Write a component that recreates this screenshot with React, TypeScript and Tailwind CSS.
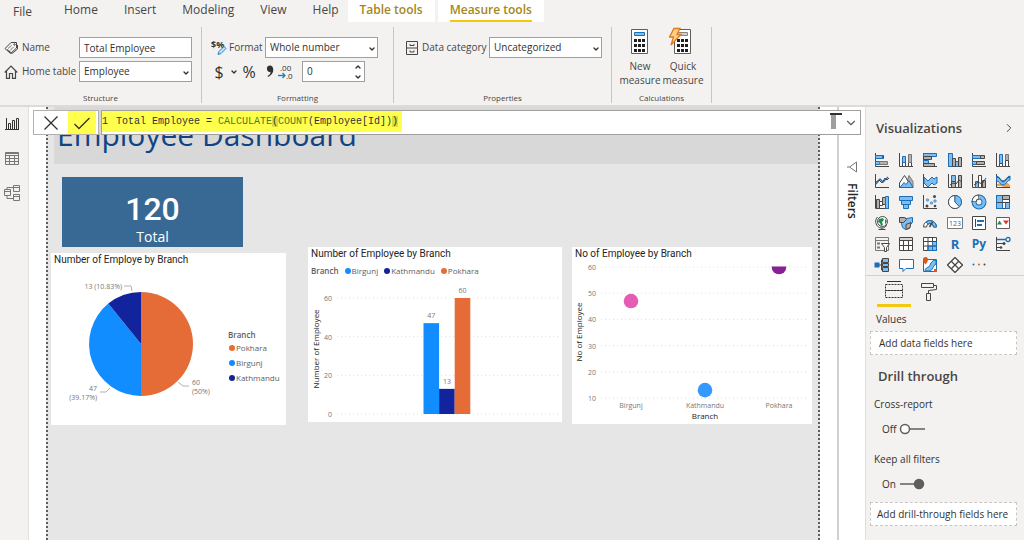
import type { ReactNode } from "react"
import { ChevronDown, ChevronRight, ChevronUp } from "lucide-react"

const tabs = ["Home", "Insert", "Modeling", "View", "Help"]

const branches = [
  { name: "Birgunj", count: 47, color: "#118dff" },
  { name: "Kathmandu", count: 13, color: "#12239e" },
  { name: "Pokhara", count: 60, color: "#e66c37" },
]

const points = [
  { name: "Birgunj", count: 47, x: 59, color: "#e65cb4" },
  { name: "Kathmandu", count: 13, x: 133, color: "#3599ff" },
  { name: "Pokhara", count: 60, x: 207, color: "#881f94" },
]

const DARK = "#484644"
const GRAY = "#b3b0ad"
const BLUE = "#7dbdf0"
const EDGE = "#1c6fb5"

const axis = <path d="M1.500 1v13.500h13.500" stroke={DARK} />

const visuals: { name: string; icon: ReactNode }[] = [
  { name: "Stacked bar chart", icon: <>{axis}<path d="M6.500 3.500h3v3h-3z" fill={GRAY} stroke={DARK} /><path d="M1.500 3.500h7v3h-7zM1.500 9.500h4v3h-4z" fill={BLUE} stroke={EDGE} /><path d="M5.500 9.500h8v3h-8z" fill={GRAY} stroke="#797775" /></> },
  { name: "Stacked column chart", icon: <>{axis}<path d="M4.500 9.500h3v5h-3zM10.500 7.500h3v7h-3z" fill="#fff" stroke={DARK} /><path d="M4.500 4.500h3v6h-3z" fill={BLUE} stroke={EDGE} /><path d="M10.500 2.500h3v8h-3z" fill={GRAY} stroke="#797775" /></> },
  { name: "Clustered bar chart", icon: <>{axis}<path d="M1.500 1.500h13v3h-13zM1.500 8.500h5v3h-5z" fill={BLUE} stroke={EDGE} /><path d="M1.500 4.500h8v3h-8zM1.500 11.500h11v3h-11z" fill={GRAY} stroke={DARK} /></> },
  { name: "Clustered column chart", icon: <>{axis}<path d="M1.500 1.500h4v13h-4zM8.500 9.500h3v5h-3z" fill={BLUE} stroke={EDGE} /><path d="M5.500 6.500h3v8h-3zM11.500 5.500h3v9h-3z" fill={GRAY} stroke={DARK} /></> },
  { name: "100% stacked bar chart", icon: <>{axis}<path d="M1.500 3.500h8v3h-8zM1.500 9.500h4v3h-4z" fill={BLUE} stroke={EDGE} /><path d="M9.500 3.500h4v3h-4zM5.500 9.500h8v3h-8z" fill={GRAY} stroke={DARK} /></> },
  { name: "100% stacked column chart", icon: <>{axis}<path d="M4.500 2.500h3v9h-3z" fill={BLUE} stroke={EDGE} /><path d="M10.500 2.500h3v6h-3z" fill={GRAY} stroke="#797775" /><path d="M4.500 11.500h3v3h-3zM10.500 8.500h3v6h-3z" fill="#fff" stroke={DARK} /></> },
  { name: "Line chart", icon: <>{axis}<path d="M2 11l4-5 3 3 5-5" stroke={EDGE} strokeWidth="1.300" /><path d="M2 9l3-2 3 3 3-5 2 2 2-2" stroke={DARK} /></> },
  { name: "Area chart", icon: <><path d="M7 14.500l4-12 4 6v6z" fill={GRAY} stroke="#797775" /><path d="M1.500 14.500V10l5-7.500 5 8v4z" fill="#fff" stroke={DARK} /><path d="M2 14.500l4-5 2 2 3-4 4 7z" fill={BLUE} stroke={EDGE} /></> },
  { name: "Stacked area chart", icon: <><path d="M2 4l4 4 4-4 2 2 3-2v6l-3 2-2-2-4 4-4-4z" fill={BLUE} stroke={EDGE} />{axis}</> },
  { name: "Line and stacked column chart", icon: <>{axis}<path d="M4.500 2.500h4v6h-4z" fill={BLUE} stroke={EDGE} /><path d="M4.500 8.500h4v6h-4zM11.500 2.500h3v12h-3z" fill={GRAY} stroke={DARK} /><path d="M3 12l3-2 3 1 3-4 3 2" stroke={DARK} /></> },
  { name: "Line and clustered column chart", icon: <>{axis}<path d="M4.500 8.500h3v6h-3z" fill={BLUE} stroke={EDGE} /><path d="M7.500 2.500h3v12h-3z" fill="#fff" stroke={DARK} /><path d="M11.500 7.500h3v7h-3z" fill={GRAY} stroke={DARK} /><path d="M3 12l4-3 4 2 4-6" stroke={DARK} /></> },
  { name: "Ribbon chart", icon: <>{axis}<path d="M2 11l4-1 3-3 6 5v2H9l-3-1H2z" fill="#f0a04b" /><path d="M1.500 3c3 0 4 5 6.500 5s4-5 7-5v4c-3 0-4 5-7 5s-3.500-4-6.500-4z" fill={BLUE} stroke={EDGE} /><path d="M2 4c3 0 4 5 6 5s4-5 7-5" stroke={DARK} /></> },
  { name: "Waterfall chart", icon: <>{axis}<path d="M2.500 5.500h3v9h-3zM8.500 3.500h3v7h-3z" fill={GRAY} stroke={DARK} /><path d="M5.500 7.500h3v4h-3z" fill="#fff" stroke={DARK} /><path d="M11.500 2.500h3v12h-3z" fill={BLUE} stroke={EDGE} /></> },
  { name: "Funnel", icon: <path d="M1.500 2.500h13v4h-13zM3.500 6.500h9v4h-9zM5.500 10.500h5v4h-5z" fill={BLUE} stroke={EDGE} /> },
  { name: "Scatter chart", icon: <>{axis}<g fill={DARK}><circle cx="12.500" cy="2.500" r="1.500" /><circle cx="5" cy="12" r="1.500" /><circle cx="13" cy="12" r="1.300" /></g><g fill={BLUE} stroke={EDGE} strokeWidth=".5"><circle cx="5.500" cy="6" r="1.300" /><circle cx="9.500" cy="9" r="1.300" /><circle cx="13" cy="7" r="1.300" /></g></> },
  { name: "Pie chart", icon: <><circle cx="8" cy="8" r="6.500" fill={BLUE} stroke={EDGE} /><path d="M8 8V1.500A6.500 6.500 0 1 0 12.500 12.700z" fill="#fff" stroke={DARK} /><path d="M8 1.500V8l4.500 4.700A6.500 6.500 0 0 0 8 1.500z" fill={BLUE} stroke={EDGE} /></> },
  { name: "Donut chart", icon: <><circle cx="8" cy="8" r="5" stroke={EDGE} strokeWidth="5" /><circle cx="8" cy="8" r="5" stroke={BLUE} strokeWidth="3" /><path d="M3 8a5 5 0 0 1 5-5" stroke={DARK} strokeWidth="5" /><path d="M3 7.300A5 5 0 0 1 7.300 3" stroke="#fff" strokeWidth="3" /></> },
  { name: "Treemap", icon: <><path d="M1.500 1.500h13v13h-13z" fill="#fff" stroke={DARK} /><path d="M1.500 1.500h6v13h-6zM10.500 8.500h4v6h-4z" fill={BLUE} stroke={EDGE} /><path d="M7.500 1.500h7v4h-7z" fill={GRAY} stroke={DARK} /><path d="M1.500 8.500h13" stroke={DARK} /></> },
  { name: "Map", icon: <><circle cx="8.500" cy="6.500" r="5" fill="#fff" stroke={DARK} /><path d="M5 4l4-1 1 2-2 2 1 3-2 1-1-3-2-1zM11 4l2 2-2 4z" fill="#218c4a" /><path d="M3.500 2C.500 5 1.500 10 4.500 12s7 1 8-2M8 13v1.500M4.500 14.500h7" stroke={DARK} /></> },
  { name: "Filled map", icon: <><path d="M1.500 3.500l5-1 2 1 6-1v5l-2 2-1 4-4 1-3-2-1-4-2-2z" fill={BLUE} stroke={EDGE} /><path d="M1.500 2.500h5l2 2-3 3-4 0zM8 9.500l5-2-1 5-4 2z" fill={GRAY} stroke={DARK} /></> },
  { name: "Gauge", icon: <><path d="M1.500 12a6.500 6.500 0 0 1 13 0h-3a3.500 3.500 0 0 0-7 0z" fill="#fff" stroke={DARK} /><path d="M4 7a6.500 6.500 0 0 1 10.500 5h-3A3.500 3.500 0 0 0 6 9z" fill={BLUE} stroke={EDGE} /><path d="M7.500 12l3-5" stroke={DARK} strokeWidth="1.500" /></> },
  { name: "Card", icon: <><path d="M.500 2.500h15v11H.500z" fill="#fff" stroke="#797775" /><text x="8" y="10.500" textAnchor="middle" fontSize="7" fill={EDGE}>123</text></> },
  { name: "Multi-row card", icon: <><path d="M1.500 1.500h13v13h-13z" fill="#fff" stroke={DARK} /><path d="M4.500 4v8" stroke={DARK} /><path d="M6 6h7M6 10h5" stroke={EDGE} strokeWidth="2" /></> },
  { name: "KPI", icon: <><path d="M1.500 2.500h13v11h-13z" fill="#fff" stroke="#605e5c" /><path d="M2 9.500l2.500-4 2.500 4z" fill="#218c4a" /><path d="M8 5.500h6l-3 4z" fill="#d83b3b" /></> },
  { name: "Slicer", icon: <><path d="M1.500 1.500h13v13h-13zM1.500 4.500h13" stroke="#797775" /><path d="M3 7.500h3M3 11.500h3" stroke="#797775" strokeWidth="2" /><path d="M7.500 7.500h8l-3 4v4h-2v-4z" fill="#fff" stroke={DARK} /></> },
  { name: "Table", icon: <><path d="M1.500 1.500h13v13h-13z" fill="#fff" stroke={DARK} /><path d="M1.500 4.500h13M1.500 9.500h13M5.500 4v10.500M10.500 4v10.500" stroke={DARK} /><path d="M2 3h12" stroke={GRAY} /></> },
  { name: "Matrix", icon: <><path d="M1.500 1.500h13v13h-13z" fill="#fff" /><path d="M10 5h5v10h-5zM5.500 10h5v5h-5z" fill={BLUE} /><path d="M1.500 1.500h13v13h-13zM1.500 5.500h13M1.500 10h13M6 1.500v13M10.500 1.500v13" stroke={DARK} /><path d="M10.500 5.500v9h4v-9M5.500 10h9M6 10v4.500h4" stroke={EDGE} /></> },
  { name: "R script visual", icon: <text x="8" y="13" textAnchor="middle" fontSize="13" fontWeight="700" fill={EDGE}>R</text> },
  { name: "Python visual", icon: <text x="8" y="12" textAnchor="middle" fontSize="12" fontWeight="700" fill={EDGE}>Py</text> },
  { name: "Key influencers", icon: <>{axis}<path d="M2 3.500h9" stroke={EDGE} strokeWidth="1.500" /><circle cx="13" cy="3.500" r="2" fill="#fff" stroke={EDGE} strokeWidth="1.300" /><path d="M2 7.500h6M2 11.500h4" stroke={DARK} /><circle cx="9" cy="7.500" r="1.500" fill={DARK} /><circle cx="6" cy="11.500" r="1.300" fill={DARK} /></> },
  { name: "Decomposition tree", icon: <><path d="M5 8h5M7.500 3v10M7.500 3H10M7.500 13H10" stroke={DARK} /><path d="M.500 5.500h5v5h-5z" fill={EDGE} /><path d="M8.500 1.500h6v4h-6zM8.500 6.500h6v3h-6zM8.500 10.500h6v4h-6z" fill={BLUE} stroke={DARK} /></> },
  { name: "Q&A", icon: <path d="M1.500 2.500h14v9H8l-3 3v-3H1.500z" fill="#fff" stroke={EDGE} /> },
  { name: "ArcGIS map", icon: <><path d="M1.500 2.500h13v12h-13z" fill="#fff" stroke={EDGE} /><path d="M3 14c0-4 4-3 5-6s3-5 6-5v4c-3 1-3 6-6 7z" fill={BLUE} stroke={EDGE} /><path d="M1 2.500a2 2 0 0 1 5 0c0 2-1 3-2.500 5-1.500-2-2.500-3-2.500-5zM12 12h3v3h-3z" fill="#d85b13" /></> },
  { name: "Power Apps", icon: <><path d="M8 .500l7.500 7.500L8 15.500.500 8z" fill="#fff" stroke={DARK} strokeWidth="1.300" /><path d="M4.500 4.500l7 7M11.500 4.500l-7 7" stroke={DARK} strokeWidth="1.300" /></> },
  { name: "Get more visuals", icon: <><circle cx="2.500" cy="7.500" r="1" fill={EDGE} /><circle cx="8" cy="7.500" r="1" fill="#d85b13" /><circle cx="13.500" cy="7.500" r="1" fill={DARK} /></> },
]

function Group({ title, className, children }: { title: string; className: string; children: ReactNode }) {
  return (
    <section className={`flex flex-col justify-between border-r border-[#c8c6c4] ${className}`}>
      <div>{children}</div>
      <h2 className="text-center text-[8px] leading-[10px] text-[#484644]">{title}</h2>
    </section>
  )
}

function Select({ id, value }: { id: string; value: string }) {
  return (
    <span className="relative block h-[21px] w-[113px]">
      <select id={id} className="h-full w-full appearance-none border border-[#a19f9d] bg-white pl-1 text-[10px] text-[#323130]">
        <option>{value}</option>
      </select>
      <ChevronDown className="pointer-events-none absolute top-2 right-[2px] h-2 w-2 text-[#323130]" strokeWidth={4} />
    </span>
  )
}

function Calculator({ quick = false }: { quick?: boolean }) {
  return (
    <svg className="h-7 w-7" viewBox="0 0 28 28" fill="none">
      <path d="M5.500 2.500h16v24h-16z" fill="#fff" stroke="#605e5c" />
      <path d="M8.500 5.500h10v3h-10z" fill={quick ? "#d2d0ce" : "#7dbdf0"} stroke={quick ? "#8a8886" : "#1c6fb5"} />
      <path d="M8 13.500h11M8 18.500h11M8 23.500h11" stroke="#201f1e" strokeWidth="3" strokeDasharray="3 1" />
      {quick && <path d="M5 1.500h6l-3 6h4L2 18l2.500-8h-4z" fill="#fcd28a" stroke="#df7a1c" strokeWidth="1.300" />}
    </svg>
  )
}

function Ribbon() {
  return (
    <header className="border-b-2 border-[#dddbda]">
      <nav className="flex h-[23px] items-start pl-[13px] text-[12px] leading-5">
        <a href="#file" className="mr-8 pt-[2px]">File</a>
        <div className="mr-[9px] flex gap-[26px]">
          {tabs.map((tab) => (
            <a key={tab} href={`#${tab.toLowerCase()}`}>{tab}</a>
          ))}
        </div>
        <a href="#table-tools" className="mr-[3px] h-[22px] bg-white px-3 font-semibold text-[#a48719]">Table tools</a>
        <a href="#measure-tools" className="h-[22px] bg-white px-3 font-semibold text-[#a48719]">
          <span className="block h-[22px] border-b-2 border-[#f2c811]">Measure tools</span>
        </a>
      </nav>

      <div className="flex h-[82px] pt-1 pb-[2px] text-[10px]">
        <Group title="Structure" className="w-[202px]">
          <div className="flex flex-col gap-[3px] pt-[10px] pl-1">
            <div className="flex items-center">
              <label htmlFor="name" className="flex w-[75px] items-center gap-1">
                <svg className="h-[14px] w-[14px]" viewBox="0 0 14 14" fill="none" stroke="#484644">
                  <path d="M1 7.500l6-6h5.500V7l-6 5.500zM3 8.500l5 4L13.500 8V4" />
                  <path d="M4 7.500l3.500-3M6 9.500L9.500 6" strokeWidth=".7" />
                  <circle cx="10.500" cy="3.500" r=".7" />
                </svg>
                Name
              </label>
              <input id="name" defaultValue="Total Employee" className="h-[21px] w-[113px] border border-[#a19f9d] bg-white pl-1 text-[#323130]" />
            </div>
            <div className="flex items-center">
              <label htmlFor="home-table" className="flex w-[75px] items-center gap-1 whitespace-nowrap">
                <svg className="h-[14px] w-[14px] shrink-0" viewBox="0 0 14 14" fill="none" stroke="#484644" strokeWidth="1.200">
                  <path d="M.700 7.500L7 1l6.300 6.500M2.500 6v7.300h3V8.500h3v4.800h3V6" />
                </svg>
                Home table
              </label>
              <Select id="home-table" value="Employee" />
            </div>
          </div>
        </Group>

        <Group title="Formatting" className="w-[192px]">
          <div className="flex flex-col gap-[3px] pt-[10px] pl-[9px]">
            <div className="flex items-center">
              <label htmlFor="format" className="flex w-[54px] items-center gap-[3px]">
                <svg className="h-4 w-[15px] overflow-visible" viewBox="0 0 15 16" fill="none">
                  <text x="0" y="8" fontSize="9" fontWeight="700" fill="#323130">$%</text>
                  <path d="M7 14.500l1-3 5-5 2 2-5 5z" fill="#c7e3f7" stroke="#1c84c6" />
                </svg>
                Format
              </label>
              <Select id="format" value="Whole number" />
            </div>
            <div className="flex h-[21px] items-center text-[#323130]">
              <button aria-label="Currency" className="w-4 text-[16px] leading-5">$</button>
              <button aria-label="Currency list" className="flex w-[14px] justify-center"><ChevronDown className="h-2 w-2" strokeWidth={4} /></button>
              <button aria-label="Percentage" className="w-4 text-[16px] leading-5">%</button>
              <button aria-label="Thousands separator" className="ml-2 w-3">
                <svg className="h-4 w-3" viewBox="0 0 12 16"><path d="M2 5a3 3 0 0 1 6-1c1 4-1 7-5 9l-.500-1C5 11 5.500 9.500 5.500 7.800 3.500 8.500 2 7 2 5z" fill="#323130" /></svg>
              </button>
              <button aria-label="Decimal places" className="ml-px w-[15px]">
                <svg className="h-4 w-[15px] overflow-visible" viewBox="0 0 15 16" fill="none">
                  <text x="2" y="7" fontSize="8" fill="#323130">.00</text>
                  <text x="8" y="15" fontSize="8" fill="#323130">.0</text>
                  <path d="M0 11.500h7M4.500 9l2.500 2.500L4.500 14" stroke="#1c84c6" strokeWidth="1.300" />
                </svg>
              </button>
              <div className="ml-[9px] flex h-[21px] w-[63px] items-center border border-[#a19f9d] bg-white pr-[2px] pl-1">
                <input aria-label="Decimal count" defaultValue="0" className="w-full min-w-0" />
                <span className="flex flex-col gap-[2px]">
                  <ChevronUp className="h-2 w-2" strokeWidth={4} />
                  <ChevronDown className="h-2 w-2" strokeWidth={4} />
                </span>
              </div>
            </div>
          </div>
        </Group>

        <Group title="Properties" className="w-[218px]">
          <div className="flex items-center pt-[10px] pl-3">
            <label htmlFor="category" className="flex w-[83px] items-center gap-1 whitespace-nowrap">
              <svg className="h-[14px] w-3 shrink-0" viewBox="0 0 12 14" fill="none" stroke="#484644">
                <path d="M.500.500h11v13H.500zM.500 7h11M4 3v1.500h4V3M4 9.500V11h4V9.500" />
              </svg>
              Data category
            </label>
            <Select id="category" value="Uncategorized" />
          </div>
        </Group>

        <Group title="Calculations" className="w-[100px]">
          <div className="flex justify-center text-center leading-[14px]">
            <button className="flex w-[43px] flex-col items-center"><Calculator /><span className="pt-1">New measure</span></button>
            <button className="flex w-[43px] flex-col items-center"><Calculator quick /><span className="pt-1">Quick measure</span></button>
          </div>
        </Group>
      </div>
    </header>
  )
}

function FormulaBar() {
  return (
    <div className="absolute top-[3px] right-1 left-1 flex h-[25px] gap-[2px]">
      <div className="flex border border-[#b3b0ad] bg-white pr-[2px]">
        <button aria-label="Cancel" className="flex w-[34px] items-center justify-center">
          <svg className="h-4 w-4" viewBox="0 0 16 16" stroke="#323130" strokeWidth="1.300"><path d="M1.500 1.500l13 13M14.500 1.500l-13 13" /></svg>
        </button>
        <button aria-label="Commit" className="flex w-7 items-center justify-center bg-[#ffff4d]">
          <svg className="h-4 w-4" viewBox="0 0 16 16" fill="none" stroke="#323130" strokeWidth="1.300"><path d="M.500 9l4.500 4.500L15.500 3" /></svg>
        </button>
      </div>
      <div className="flex min-w-0 flex-1 border border-[#a19f9d] bg-white">
        <div className="h-[21px] w-[300px] bg-[#ffff4d] font-['Liberation_Mono',monospace] text-[10px] leading-[21px] whitespace-pre text-[#323130]">
          <span className="mr-2">1</span>
          <span role="textbox" aria-label="Formula">
            Total Employee = <span className="text-[#3f7f1f]">CALCULATE</span>
            <span className="bg-[#dcdc3c]">(</span><span className="text-[#3f7f1f]">COUNT</span>(Employee[Id])<span className="bg-[#dcdc3c]">)</span>
          </span>
        </div>
        <div className="ml-auto flex">
          <svg className="h-[23px] w-3" viewBox="0 0 12 23"><path d="M1 3h5v15H1z" fill="#a19f9d" /><path d="M0 2h12v2H0z" fill="#323130" /></svg>
          <button aria-label="Expand formula" className="flex w-[18px] items-center justify-center">
            <ChevronDown className="h-[14px] w-[14px] text-[#605e5c]" strokeWidth={2} />
          </button>
        </div>
      </div>
    </div>
  )
}

function ChartCard({ title, className, children }: { title: string; className: string; children: ReactNode }) {
  return (
    <section className={`min-w-0 bg-white text-[#252423] ${className}`}>
      <h3 className="pl-[3px] font-['Roboto',sans-serif] text-[10px] leading-[13px] whitespace-nowrap">{title}</h3>
      {children}
    </section>
  )
}

function PieChart() {
  const legend = [branches[2], branches[0], branches[1]]
  return (
    <svg className="block w-full" viewBox="0 0 235 159" fontSize="7" fill="#777">
      <path d="M90 26a52 52 0 0 1 0 104z" fill="#e66c37" />
      <path d="M90 78v52a52 52 0 0 1-32.700-92.400z" fill="#118dff" />
      <path d="M90 78L57.300 37.600A52 52 0 0 1 90 26z" fill="#12239e" />
      <path d="M73 20h7l1 5M49 126h6l4-4M127 116l5 4h6" fill="none" stroke="#b3b0ad" />
      <text x="71" y="23" textAnchor="end">13 (10.83%)</text>
      <text x="46" y="125" textAnchor="end">47</text>
      <text x="46" y="134" textAnchor="end">(39.17%)</text>
      <text x="141" y="119">60</text>
      <text x="141" y="128">(50%)</text>
      <text x="177" y="72" fontSize="8" fontWeight="600" fill="#605e5c">Branch</text>
      {legend.map((b, i) => (
        <g key={b.name}>
          <circle cx="181" cy={82 + i * 15} r="3" fill={b.color} />
          <text x="185" y={85 + i * 15} fontSize="8" fill="#605e5c">{b.name}</text>
        </g>
      ))}
    </svg>
  )
}

function ColumnChart() {
  const y = (v: number) => 137 - v * 1.933
  return (
    <>
      <ul className="flex h-[17px] items-center gap-[6px] pt-1 pl-[3px] text-[8px] text-[#605e5c]">
        <li className="font-semibold">Branch</li>
        {branches.map((b) => (
          <li key={b.name} className="flex items-center gap-px">
            <span className="h-[6px] w-[6px] rounded-full" style={{ backgroundColor: b.color }} />
            {b.name}
          </li>
        ))}
      </ul>
      <svg className="block w-full" viewBox="0 0 254 145" fontSize="7" fill="#777">
        {[0, 20, 40, 60].map((v) => (
          <g key={v}>
            <path d={`M29 ${y(v)}h222`} stroke="#e1dfdd" strokeDasharray="1 3" />
            <text x="24" y={y(v) + 3} textAnchor="end">{v}</text>
          </g>
        ))}
        {branches.map((b, i) => (
          <g key={b.name}>
            <rect x={115.5 + i * 15.6} y={y(b.count)} width="15.600" height={y(0) - y(b.count)} fill={b.color} />
            <text x={123.3 + i * 15.6} y={y(b.count) - 5} textAnchor="middle">{b.count}</text>
          </g>
        ))}
        <text transform="translate(11 72) rotate(-90)" textAnchor="middle" fontSize="8" fill="#252423">Number of Employee</text>
      </svg>
    </>
  )
}

function ScatterChart() {
  const y = (v: number) => 7 + (60 - v) * 2.62
  return (
    <svg className="block w-full" viewBox="0 0 240 164" fontSize="7" fill="#777">
      <clipPath id="plot"><path d="M29 6.500h208v132H29z" /></clipPath>
      {[10, 20, 30, 40, 50, 60].map((v) => (
        <g key={v}>
          <path d={`M29 ${y(v)}h208`} stroke="#e1dfdd" strokeDasharray="1 3" />
          <text x="24" y={y(v) + 3} textAnchor="end">{v}</text>
        </g>
      ))}
      {points.map((p) => (
        <g key={p.name}>
          <circle cx={p.x} cy={y(p.count)} r="7.300" fill={p.color} clipPath="url(#plot)" />
          <text x={p.x} y="148" textAnchor="middle">{p.name}</text>
        </g>
      ))}
      <text x="133" y="159" textAnchor="middle" fontSize="8" fill="#252423">Branch</text>
      <text transform="translate(10 72) rotate(-90)" textAnchor="middle" fontSize="8" fill="#252423">No of Employee</text>
    </svg>
  )
}

function Report() {
  return (
    <main className="flex min-w-0 flex-1 flex-col bg-white px-[17px]">
      <div className="flex-1 border-x-2 border-dotted border-[#605e5c] bg-[#e6e6e6]">
        <div className="ml-[6px] h-[57px] bg-[#d8d8d8] pt-[13px] pl-[3px]">
          <h1 className="text-[30px] leading-[30px] text-[#0f4484]">Employee Dashboard</h1>
        </div>
        <div className="mt-[13px] ml-[14px] flex h-[70px] w-[181px] flex-col items-center justify-end bg-[#386995] text-white">
          <strong className="mb-[2px] font-['Roboto',sans-serif] text-[32px] leading-8 font-medium">120</strong>
          <span className="text-[14px] leading-5">Total</span>
        </div>
        <div className="flex items-start gap-[10px] pr-[6px] pl-[3px]">
          <ChartCard title="Number of Employe by Branch" className="mt-[6px] mr-3 flex-[235]"><PieChart /></ChartCard>
          <ChartCard title="Number of Employee by Branch" className="flex-[254]"><ColumnChart /></ChartCard>
          <ChartCard title="No of Employee by Branch" className="flex-[240]"><ScatterChart /></ChartCard>
        </div>
      </div>
    </main>
  )
}

function Toggle({ label, on }: { label: string; on: boolean }) {
  return (
    <label className="flex h-5 items-center gap-[2px] pl-4">
      <input type="checkbox" aria-label={label} defaultChecked={on} className="sr-only" />
      <span>{on ? "On" : "Off"}</span>
      <svg className="h-3 w-7" viewBox="0 0 28 12" stroke="#605e5c" strokeWidth="1.500">
        <path d="M2 6h24" />
        {on ? <circle cx="21" cy="6" r="4.500" fill="#605e5c" /> : <circle cx="6" cy="6" r="4.500" fill="#fff" />}
      </svg>
    </label>
  )
}

function Visualizations() {
  return (
    <aside className="w-[159px] shrink-0 border-l border-[#e1dfdd] text-[10px] leading-4 text-[#323130]">
      <div className="flex h-[42px] items-center justify-between pr-2 pl-[10px]">
        <h2 className="text-[13px] font-semibold text-[#484644]">Visualizations</h2>
        <button aria-label="Collapse"><ChevronRight className="h-[14px] w-[14px]" strokeWidth={1.5} /></button>
      </div>
      <div className="grid grid-cols-6 border-b border-[#d2d0ce] pr-[9px] pl-1">
        {visuals.map((v) => (
          <button key={v.name} aria-label={v.name} className="flex h-[21px] items-center justify-center">
            <svg className="h-4 w-4" viewBox="0 0 16 16" fill="none">{v.icon}</svg>
          </button>
        ))}
      </div>
      <div className="flex pl-[11px]">
        <button aria-label="Fields" className="flex h-[31px] w-[34px] items-center justify-center border-b-[3px] border-[#f2c811]">
          <svg className="h-5 w-5" viewBox="0 0 20 20" fill="none" stroke="#323130">
            <path d="M3 1.500h14" />
            <path d="M1.500 4.500h17v6h-17zM1.500 10.500h17v7h-17z" strokeDasharray="2 1" />
          </svg>
        </button>
        <button aria-label="Format" className="flex h-[31px] w-9 items-center justify-center">
          <svg className="h-5 w-5" viewBox="0 0 20 20" fill="none" stroke="#484644">
            <path d="M2.500 1.500h12v4h-12zM14.500 3.500h3v4l-8 1v3M7.500 11.500h4v7h-4z" />
          </svg>
        </button>
      </div>
      <p className="pt-1 pl-[10px]">Values</p>
      <div className="mt-1 mr-[7px] ml-1 flex h-6 items-center border border-dashed border-[#c8c6c4] bg-white pl-2">Add data fields here</div>
      <h2 className="mt-[13px] pl-3 text-[13px] font-semibold text-[#484644]">Drill through</h2>
      <p className="mt-3 pl-2">Cross-report</p>
      <div className="mt-[7px]"><Toggle label="Cross-report" on={false} /></div>
      <p className="mt-3 pl-2">Keep all filters</p>
      <div className="mt-[7px]"><Toggle label="Keep all filters" on /></div>
      <div className="mt-2 mr-[7px] mb-3 ml-1 flex h-6 items-center border border-dashed border-[#c8c6c4] bg-white pl-[6px] whitespace-nowrap">Add drill-through fields here</div>
    </aside>
  )
}

export default function App() {
  return (
    <div className="flex min-h-screen flex-col bg-[#f3f2f1] font-['Open_Sans','Noto_Sans',sans-serif] text-[#484644]">
      <Ribbon />
      <div className="flex flex-1">
        <nav className="flex w-[29px] shrink-0 flex-col items-center gap-[18px] border-r border-[#e1dfdd] pt-[9px] pr-1">
          <button aria-label="Report view">
            <svg className="h-4 w-4" viewBox="0 0 16 16" fill="none" stroke="#323130"><path d="M2.500 2v12M1 13.500h14M4.500 7.500h2v6h-2zM8.500 4.500h2v9h-2zM12.500 2.500h2v11h-2z" /></svg>
          </button>
          <button aria-label="Data view">
            <svg className="h-4 w-4" viewBox="0 0 16 16" fill="none" stroke="#797775"><path d="M1.500 2.500h13v12h-13zM1.500 5.500h13M1.500 8.500h13M1.500 11.500h13M5.500 5v9.500M10.500 5v9.500M1.500 3.500h13" /></svg>
          </button>
          <button aria-label="Model view">
            <svg className="h-[18px] w-4" viewBox="0 0 16 18" fill="none" stroke="#797775"><path d="M.500 5.500h6v6h-6zM.500 7.500h6M9.500 1.500h6v6h-6zM9.500 3.500h6M9.500 10.500h6v6h-6zM9.500 12.500h6M3 5V3.500h6.500M3 12v2.500h6.500" /></svg>
          </button>
        </nav>
        <div className="relative flex min-w-0 flex-1">
          <Report />
          <aside className="flex w-7 shrink-0 flex-col items-center border-l-2 border-[#d2d0ce] bg-white pt-[54px]">
            <svg className="h-3 w-3" viewBox="0 0 12 12" fill="none" stroke="#797775"><path d="M1 6h2.500L10.500 1v10L3.500 6" /></svg>
            <h2 className="mt-[10px] text-[12px] leading-4 font-semibold text-[#252423] [writing-mode:vertical-rl]">Filters</h2>
          </aside>
          <FormulaBar />
        </div>
        <Visualizations />
      </div>
    </div>
  )
}
